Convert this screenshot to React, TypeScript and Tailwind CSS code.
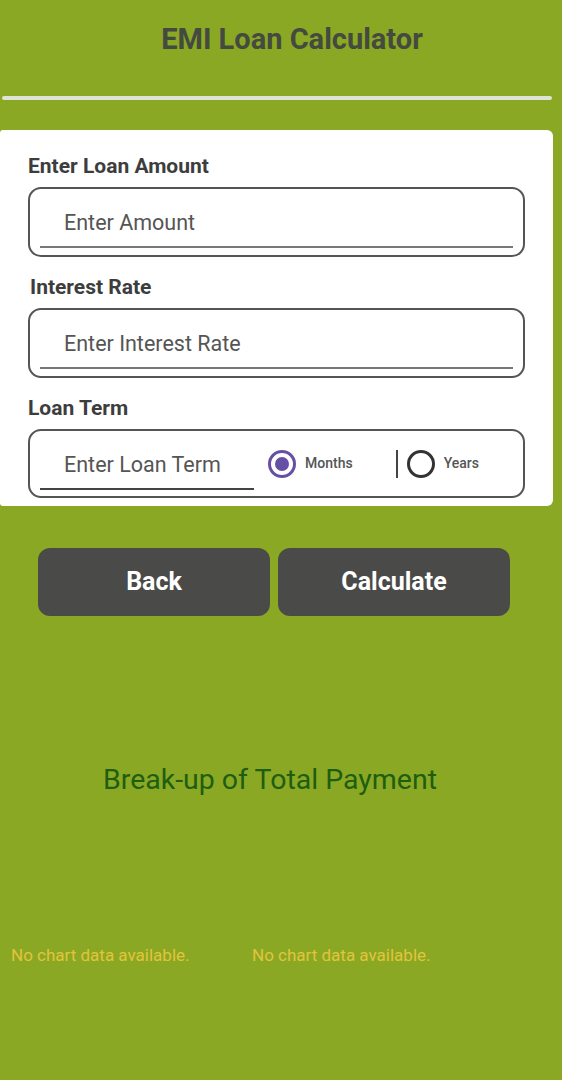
const font = { fontFamily: "Roboto, 'Liberation Sans', sans-serif" };

function Field({ label, placeholder, labelPad }: { label: string; placeholder: string; labelPad: string }) {
  return (
    <div>
      <div className={`h-[30px] ${labelPad} text-[21px] font-bold leading-[30px] text-[#3d3d3d]`}>{label}</div>
      <div className="ml-[28px] mr-[28px] mt-[6px] h-[70px] rounded-[13px] border-2 border-[#555] px-[10px] pt-[19px]">
        <div className="border-b-2 border-[#777] pb-[8px] pl-[24px] text-[21.5px] leading-[30px] text-[#555]">
          {placeholder}
        </div>
      </div>
    </div>
  );
}

export default function App() {
  return (
    <div className="min-h-[1080px] w-[562px] bg-[#8aa823]" style={font}>
      <div className="flex h-[80px] items-center justify-center pl-[22px] text-[29px] font-bold text-[#444a3f]">
        EMI Loan Calculator
      </div>
      <div className="mx-[2px] mt-[16px] h-[4px] w-[550px] rounded-sm bg-[#dfe3d8]" />
      <div className="mt-[30px] w-[553px] rounded-r-[6px] rounded-l-[3px] bg-white pb-[8px] pt-[21px]">
        <Field label="Enter Loan Amount" placeholder="Enter Amount" labelPad="pl-[28px]" />
        <div className="h-[15px]" />
        <Field label="Interest Rate" placeholder="Enter Interest Rate" labelPad="pl-[30px]" />
        <div className="h-[15px]" />
        <div>
          <div className="h-[30px] pl-[28px] text-[21px] font-bold leading-[30px] text-[#3d3d3d]">Loan Term</div>
          <div className="ml-[28px] mr-[28px] mt-[6px] flex h-[69px] items-center rounded-[13px] border-2 border-[#555] pl-[10px]">
            <div className="mt-[12px] w-[214px] border-b-2 border-[#444] pb-[8px] pl-[24px] text-[21.5px] leading-[30px] text-[#555]">
              Enter Loan Term
            </div>
            <div className="ml-[14px] flex items-center">
              <span className="flex h-[28px] w-[28px] items-center justify-center rounded-full border-[3px] border-[#6750a4]">
                <span className="h-[14px] w-[14px] rounded-full bg-[#6750a4]" />
              </span>
              <span className="ml-[9px] text-[14px] font-medium text-[#555]">Months</span>
            </div>
            <div className="ml-[43px] h-[28px] w-[2px] bg-[#444]" />
            <div className="ml-[9px] flex items-center">
              <span className="h-[28px] w-[28px] rounded-full border-[3px] border-[#333]" />
              <span className="ml-[9px] text-[14px] font-medium text-[#555]">Years</span>
            </div>
          </div>
        </div>
      </div>
      <div className="mt-[42px] flex gap-[8px] pl-[38px]">
        <button className="h-[68px] w-[232px] rounded-[12px] bg-[#4a4a48] text-[25px] font-bold text-white">Back</button>
        <button className="h-[68px] w-[232px] rounded-[12px] bg-[#4a4a48] text-[25px] font-bold text-white">Calculate</button>
      </div>
      <div className="mt-[147px] pl-[103px] text-[28.5px] leading-[34px] text-[#1e5e10]">Break-up of Total Payment</div>
      <div className="mt-[146px] flex text-[17px] leading-[24px] text-[#e2c43c]">
        <div className="w-[252px] pl-[11px]">No chart data available.</div>
        <div>No chart data available.</div>
      </div>
    </div>
  );
}
